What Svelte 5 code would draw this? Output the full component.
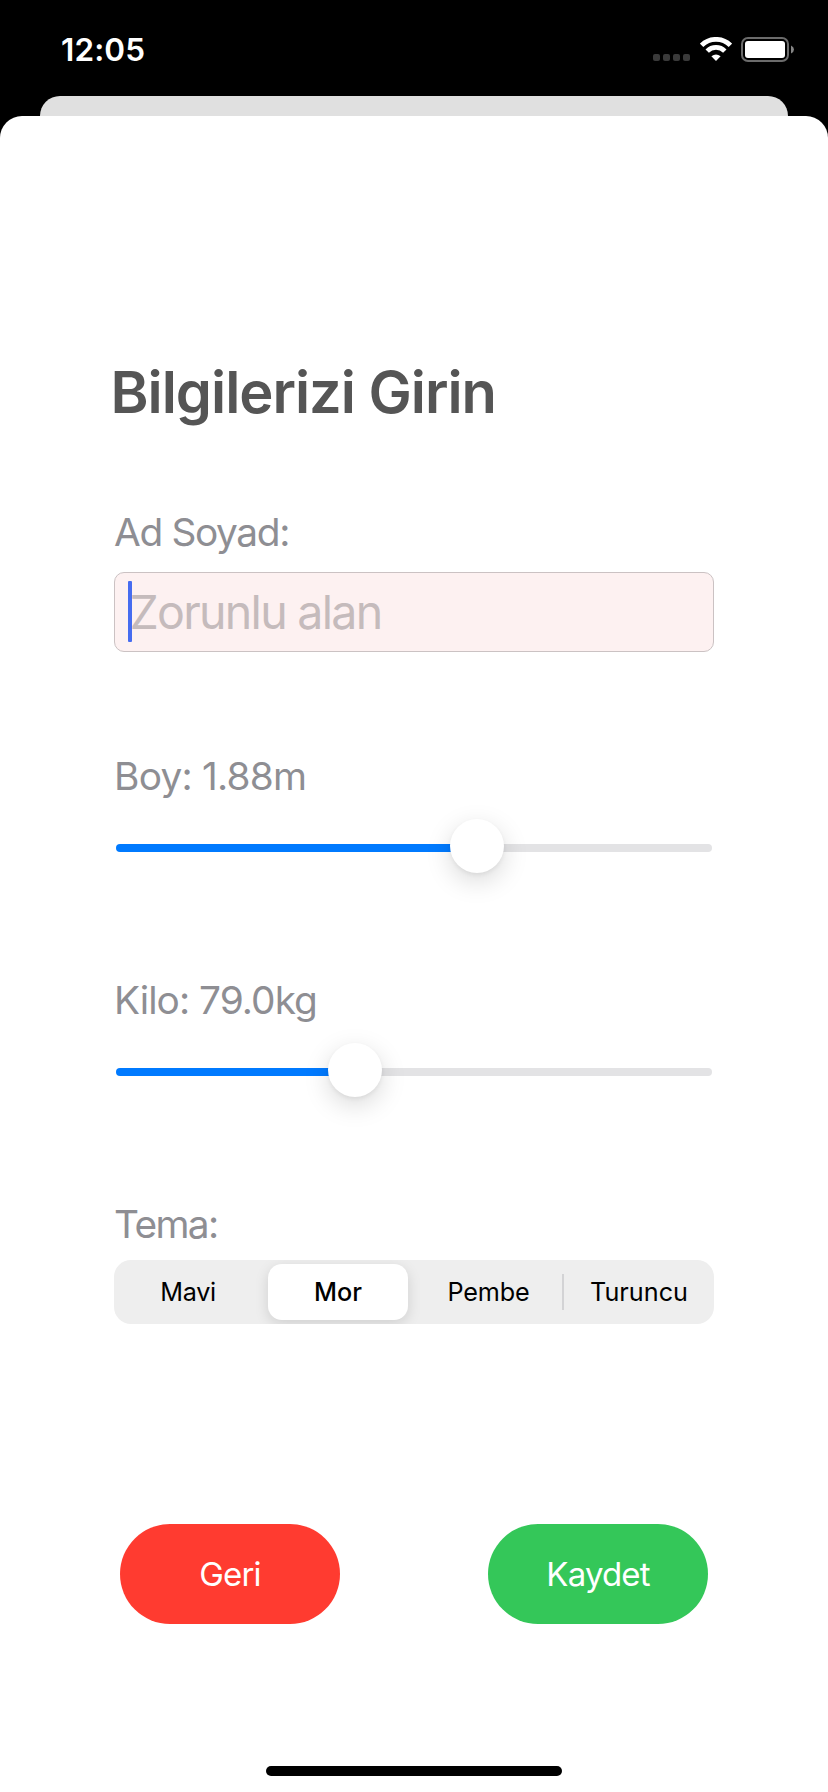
<script>
  const sliders = [
    { label: 'Boy: 1.88m', fill: 361, kind: 'boy' },
    { label: 'Kilo: 79.0kg', fill: 239, kind: 'kilo' }
  ];
  const themes = ['Mavi', 'Mor', 'Pembe', 'Turuncu'];
  let selected = $state('Mor');
</script>

<div class="screen">
  <header class="status">
    <span class="clock">12:05</span>
    <div class="icons">
      <div class="dots"><i></i><i></i><i></i><i></i></div>
      <svg class="wifi" width="32" height="24" viewBox="0 0 32 24" fill="none" stroke="#fff">
        <path d="M1.6 8.3 A20.4 20.4 0 0 1 30.4 8.3" stroke-width="4.8" />
        <path d="M7.2 14.1 A12.4 12.4 0 0 1 24.8 14.1" stroke-width="4.8" />
        <path d="M16 24 L11.4 19.2 Q16 15.6 20.6 19.2 Z" fill="#fff" stroke="none" />
      </svg>
      <svg class="battery" width="54" height="26" viewBox="0 0 54 26">
        <rect x="1" y="1" width="46" height="23" rx="6" fill="none" stroke="#6b6b6b" stroke-width="2" />
        <rect x="4" y="4" width="40" height="17" rx="3" fill="#fff" />
        <path d="M50 8.5 Q53 9.8 53 12.5 Q53 15.2 50 16.5 Z" fill="#858585" />
      </svg>
    </div>
  </header>
  <div class="behind"></div>
  <main class="sheet">
    <h1>Bilgilerizi Girin</h1>
    <section class="name">
      <div class="label ad">Ad Soyad:</div>
      <div class="field"><span class="caret"></span><span class="placeholder">Zorunlu alan</span></div>
    </section>
    {#each sliders as s}
      <section class="range">
        <div class="label {s.kind}">{s.label}</div>
        <div class="slider">
          <div class="done" style="width: {s.fill}px"></div>
          <div class="thumb"></div>
          <div class="rest"></div>
        </div>
      </section>
    {/each}
    <section class="theme">
      <div class="label tema">Tema:</div>
      <div class="segments">
        {#each themes as t}
          <button class="seg {t.toLowerCase()}" class:on={selected === t} onclick={() => (selected = t)}><span>{t}</span></button>
        {/each}
      </div>
    </section>
    <div class="actions">
      <button class="back">Geri</button>
      <button class="save">Kaydet</button>
    </div>
    <div class="home"></div>
  </main>
</div>

<style>
  :global(body) { margin: 0; background: #000; }
  .screen { width: 828px; height: 1792px; background: #000; font-family: Inter, sans-serif; display: flex; flex-direction: column; overflow: hidden; }
  button { border: 0; padding: 0; margin: 0; background: none; font-family: inherit; }
  .status { height: 96px; box-sizing: border-box; padding: 0 33px 0 61px; display: flex; justify-content: space-between; flex: none; }
  .clock { color: #fff; font-size: 31.5px; font-weight: 560; line-height: 100px; letter-spacing: 0.1px; }
  .icons { display: flex; align-items: flex-start; }
  .dots { display: flex; gap: 3px; margin: 54px 10px 0 0; }
  .dots i { width: 7px; height: 7px; border-radius: 2px; background: #3a3a3a; }
  .wifi { margin: 37px 9px 0 0; }
  .battery { margin-top: 37px; }
  .behind { height: 20px; margin: 0 40px; background: #e0e0e0; border-radius: 20px 20px 0 0; flex: none; }
  .sheet { flex: 1; background: #fff; border-radius: 22px 22px 0 0; padding: 236px 114px 0; display: flex; flex-direction: column; }
  h1 { margin: 0 0 72px -3.5px; font-size: 57.8px; line-height: 80px; font-weight: 580; color: #555; letter-spacing: -1px; white-space: nowrap; }
  .label { font-size: 38.8px; line-height: 56px; color: #8e8e93; white-space: nowrap; }
  .ad { letter-spacing: -1.35px; }
  .boy { letter-spacing: -0.75px; }
  .kilo { letter-spacing: -0.95px; }
  .tema { letter-spacing: -1.6px; }
  .name { margin-bottom: 96px; }
  .field { margin-top: 12px; height: 80px; box-sizing: border-box; border: 1px solid #cbc2c3; border-radius: 10px; background: #fdf1f1; display: flex; align-items: center; padding-left: 13px; }
  .caret { width: 4px; height: 61px; margin-top: -1px; border-radius: 1px; background: #466cf0; flex: none; }
  .placeholder { font-size: 46.5px; line-height: 78px; color: #c5bbbc; letter-spacing: -1.7px; margin-left: -2.5px; white-space: nowrap; }
  .range { margin-bottom: 99px; }
  .slider { height: 54px; margin: 15px 2px 0; display: flex; align-items: center; }
  .done, .rest { height: 8px; margin-top: 4px; }
  .done { background: #007aff; border-radius: 4px 0 0 4px; margin-right: -27px; }
  .rest { background: #e3e3e5; border-radius: 0 4px 4px 0; flex: 1; margin-left: -27px; }
  .thumb { width: 54px; height: 54px; border-radius: 50%; background: #fff; flex: none; position: relative; z-index: 1; box-shadow: 0 8px 26px rgba(0, 0, 0, 0.15), 0 2px 4px rgba(0, 0, 0, 0.06); }
  .segments { margin-top: 8px; height: 64px; background: #eee; border-radius: 17px; display: grid; grid-template-columns: repeat(4, 150px); align-items: center; overflow: hidden; }
  .seg { height: 56px; font-size: 25.2px; line-height: 56px; color: #000; text-align: center; }
  .mavi { letter-spacing: -0.3px; padding-right: 2px; }
  .pembe { letter-spacing: -0.2px; padding-right: 1px; }
  .seg.on { width: 140px; margin-left: 4px; background: #fff; border-radius: 14px; font-weight: 540; box-shadow: 0 4px 14px rgba(0, 0, 0, 0.13); }
  .turuncu { height: 36px; line-height: 36px; border-left: 2px solid #d3d3d5; margin-left: -2px; }
  .actions { margin: 200px 6px 0; display: flex; justify-content: space-between; }
  .actions button { width: 220px; height: 100px; border-radius: 50px; color: #fff; font-size: 33px; line-height: 100px; letter-spacing: -0.85px; }
  .back { background: #ff3b30; }
  .save { background: #34c759; }
  .home { width: 296px; height: 10px; border-radius: 5px; background: #000; align-self: center; margin-top: 142px; }
</style>
